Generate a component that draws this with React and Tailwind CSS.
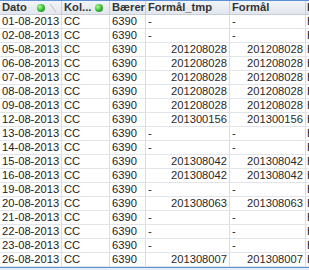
import React from "react";

const rows = [
  ["01-08-2013", "CC", "6390", "-", "-"],
  ["02-08-2013", "CC", "6390", "-", "-"],
  ["05-08-2013", "CC", "6390", "201208028", "201208028"],
  ["06-08-2013", "CC", "6390", "201208028", "201208028"],
  ["07-08-2013", "CC", "6390", "201208028", "201208028"],
  ["08-08-2013", "CC", "6390", "201208028", "201208028"],
  ["09-08-2013", "CC", "6390", "201208028", "201208028"],
  ["12-08-2013", "CC", "6390", "201300156", "201300156"],
  ["13-08-2013", "CC", "6390", "-", "-"],
  ["14-08-2013", "CC", "6390", "-", "-"],
  ["15-08-2013", "CC", "6390", "201308042", "201308042"],
  ["16-08-2013", "CC", "6390", "201308042", "201308042"],
  ["19-08-2013", "CC", "6390", "-", "-"],
  ["20-08-2013", "CC", "6390", "201308063", "201308063"],
  ["21-08-2013", "CC", "6390", "-", "-"],
  ["22-08-2013", "CC", "6390", "-", "-"],
  ["23-08-2013", "CC", "6390", "-", "-"],
  ["26-08-2013", "CC", "6390", "201308007", "201308007"],
];

// green status dot shown in the header
const Dot = () => (
  <span className="inline-block w-[8px] h-[8px] rounded-full bg-[radial-gradient(circle_at_35%_35%,#b6f5a0,#2fb82a_55%,#1c7d19)]" />
);

// value cell for the Formål columns: numbers right, dashes left
const Val = ({ v, w }) => (
  <div
    className={`${w} h-full border-r border-[#d9dde2] px-[2px] flex items-center text-[#2a2a2a] ${
      v === "-" ? "justify-start" : "justify-end"
    }`}
  >
    {v}
  </div>
);

export default function App() {
  return (
    <div
      className="w-[309px] h-[270px] overflow-hidden bg-white text-[11.2px] leading-none"
      style={{ fontFamily: '"Liberation Sans", Arial, sans-serif' }}
    >
      {/* header */}
      <div className="h-[15px] border-t border-[#5b8fd3] border-b border-b-[#c9ced6] bg-[linear-gradient(#f1f4f8,#e2e7ee)] flex font-bold text-[#333]">
        <div className="w-[62px] h-full border-r border-[#c9ced6] pl-[2px] flex items-center">
          <span>Dato</span>
          <span className="ml-[10px] flex items-center"><Dot /></span>
          <svg width="8" height="10" className="ml-[4px]" viewBox="0 0 8 10">
            <path d="M1 1 L7 9" stroke="#b9bec6" strokeWidth="1" />
          </svg>
        </div>
        <div className="w-[48px] h-full border-r border-[#c9ced6] pl-[2px] flex items-center">
          <span>Kol...</span>
          <span className="ml-[4px] flex items-center"><Dot /></span>
        </div>
        <div className="w-[36px] h-full border-r border-[#c9ced6] pl-[2px] flex items-center overflow-hidden whitespace-nowrap">
          Bærer
        </div>
        <div className="w-[84px] h-full border-r border-[#c9ced6] pl-[2px] flex items-center">
          Formål_tmp
        </div>
        <div className="w-[76px] h-full border-r border-[#c9ced6] pl-[2px] flex items-center">
          Formål
        </div>
        <div className="flex-1 h-full overflow-hidden pl-[1px] flex items-center">B</div>
      </div>

      {/* body rows */}
      {rows.map((r) => (
        <div key={r[0]} className="h-[14px] border-b border-[#e1e4e8] flex text-[#1c1c1c]">
          <div className="w-[62px] h-full border-r border-[#d9dde2] pl-[2px] flex items-center">{r[0]}</div>
          <div className="w-[48px] h-full border-r border-[#d9dde2] pl-[2px] flex items-center">{r[1]}</div>
          <div className="w-[36px] h-full border-r border-[#d9dde2] pl-[2px] flex items-center">{r[2]}</div>
          <Val v={r[3]} w="w-[84px]" />
          <Val v={r[4]} w="w-[76px]" />
          <div className="flex-1 h-full overflow-hidden pl-[1px] flex items-center">B</div>
        </div>
      ))}

      <div className="h-[1px] bg-[#5b8fd3]" />
      <div className="h-[4px] bg-[#e9edf2]" />
    </div>
  );
}
